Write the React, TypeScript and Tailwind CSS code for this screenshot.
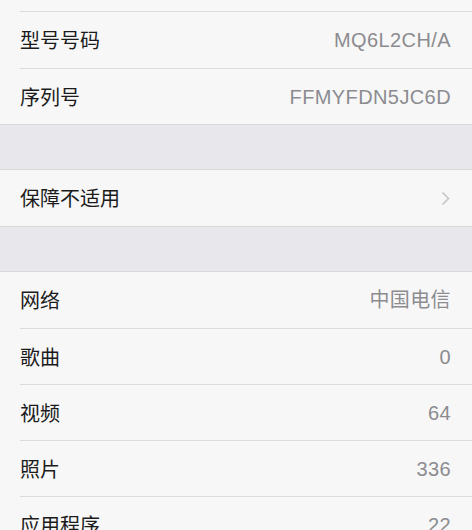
import React from "react";

const font = { fontFamily: '"Noto Sans CJK SC", "Liberation Sans", sans-serif' };

type Item = { label: string; value?: string; chevron?: boolean };

const groups: Item[][] = [
  [
    { label: "型号号码", value: "MQ6L2CH/A" },
    { label: "序列号", value: "FFMYFDN5JC6D" },
  ],
  [{ label: "保障不适用", chevron: true }],
  [
    { label: "网络", value: "中国电信" },
    { label: "歌曲", value: "0" },
    { label: "视频", value: "64" },
    { label: "照片", value: "336" },
    { label: "应用程序", value: "22" },
  ],
];

function Row({ item, first }: { item: Item; first: boolean }) {
  return (
    <div className="pl-5">
      <div
        className={
          "flex h-[56px] items-center justify-between pr-[21px] " +
          (first ? "" : "border-t border-[#dcdcdf]")
        }
      >
        <span className="text-[20px] text-[#1b1b1b]">{item.label}</span>
        {item.chevron ? (
          <svg width="9" height="15" viewBox="0 0 9 15" className="mr-[1px]">
            <path d="M1.5 1.5 L7.5 7.5 L1.5 13.5" fill="none" stroke="#c4c4c9" strokeWidth="1.6" />
          </svg>
        ) : (
          <span
            className="text-[20px] tracking-[0.4px] text-[#8c8c90]"
            style={{ fontFamily: '"Liberation Sans", "Noto Sans CJK SC", sans-serif' }}
          >
            {item.value}
          </span>
        )}
      </div>
    </div>
  );
}

export default function App() {
  return (
    <div className="h-[530px] w-[472px] overflow-hidden bg-[#e8e8ec]" style={font}>
      {/* tail of the row above */}
      <div className="bg-[#f7f7f7]">
        <div className="h-[11px]" />
        <div className="ml-5 border-t border-[#dcdcdf]" />
      </div>
      {groups.map((group, gi) => (
        <div key={gi}>
          <div className="border-b border-[#d9d9dc] bg-[#f7f7f7]">
            {group.map((item, i) => (
              <Row key={item.label} item={item} first={i === 0} />
            ))}
          </div>
          {gi < groups.length - 1 && (
            <div className="h-[45px] border-b border-[#d9d9dc] bg-[#e8e8ec]" />
          )}
        </div>
      ))}
    </div>
  );
}
